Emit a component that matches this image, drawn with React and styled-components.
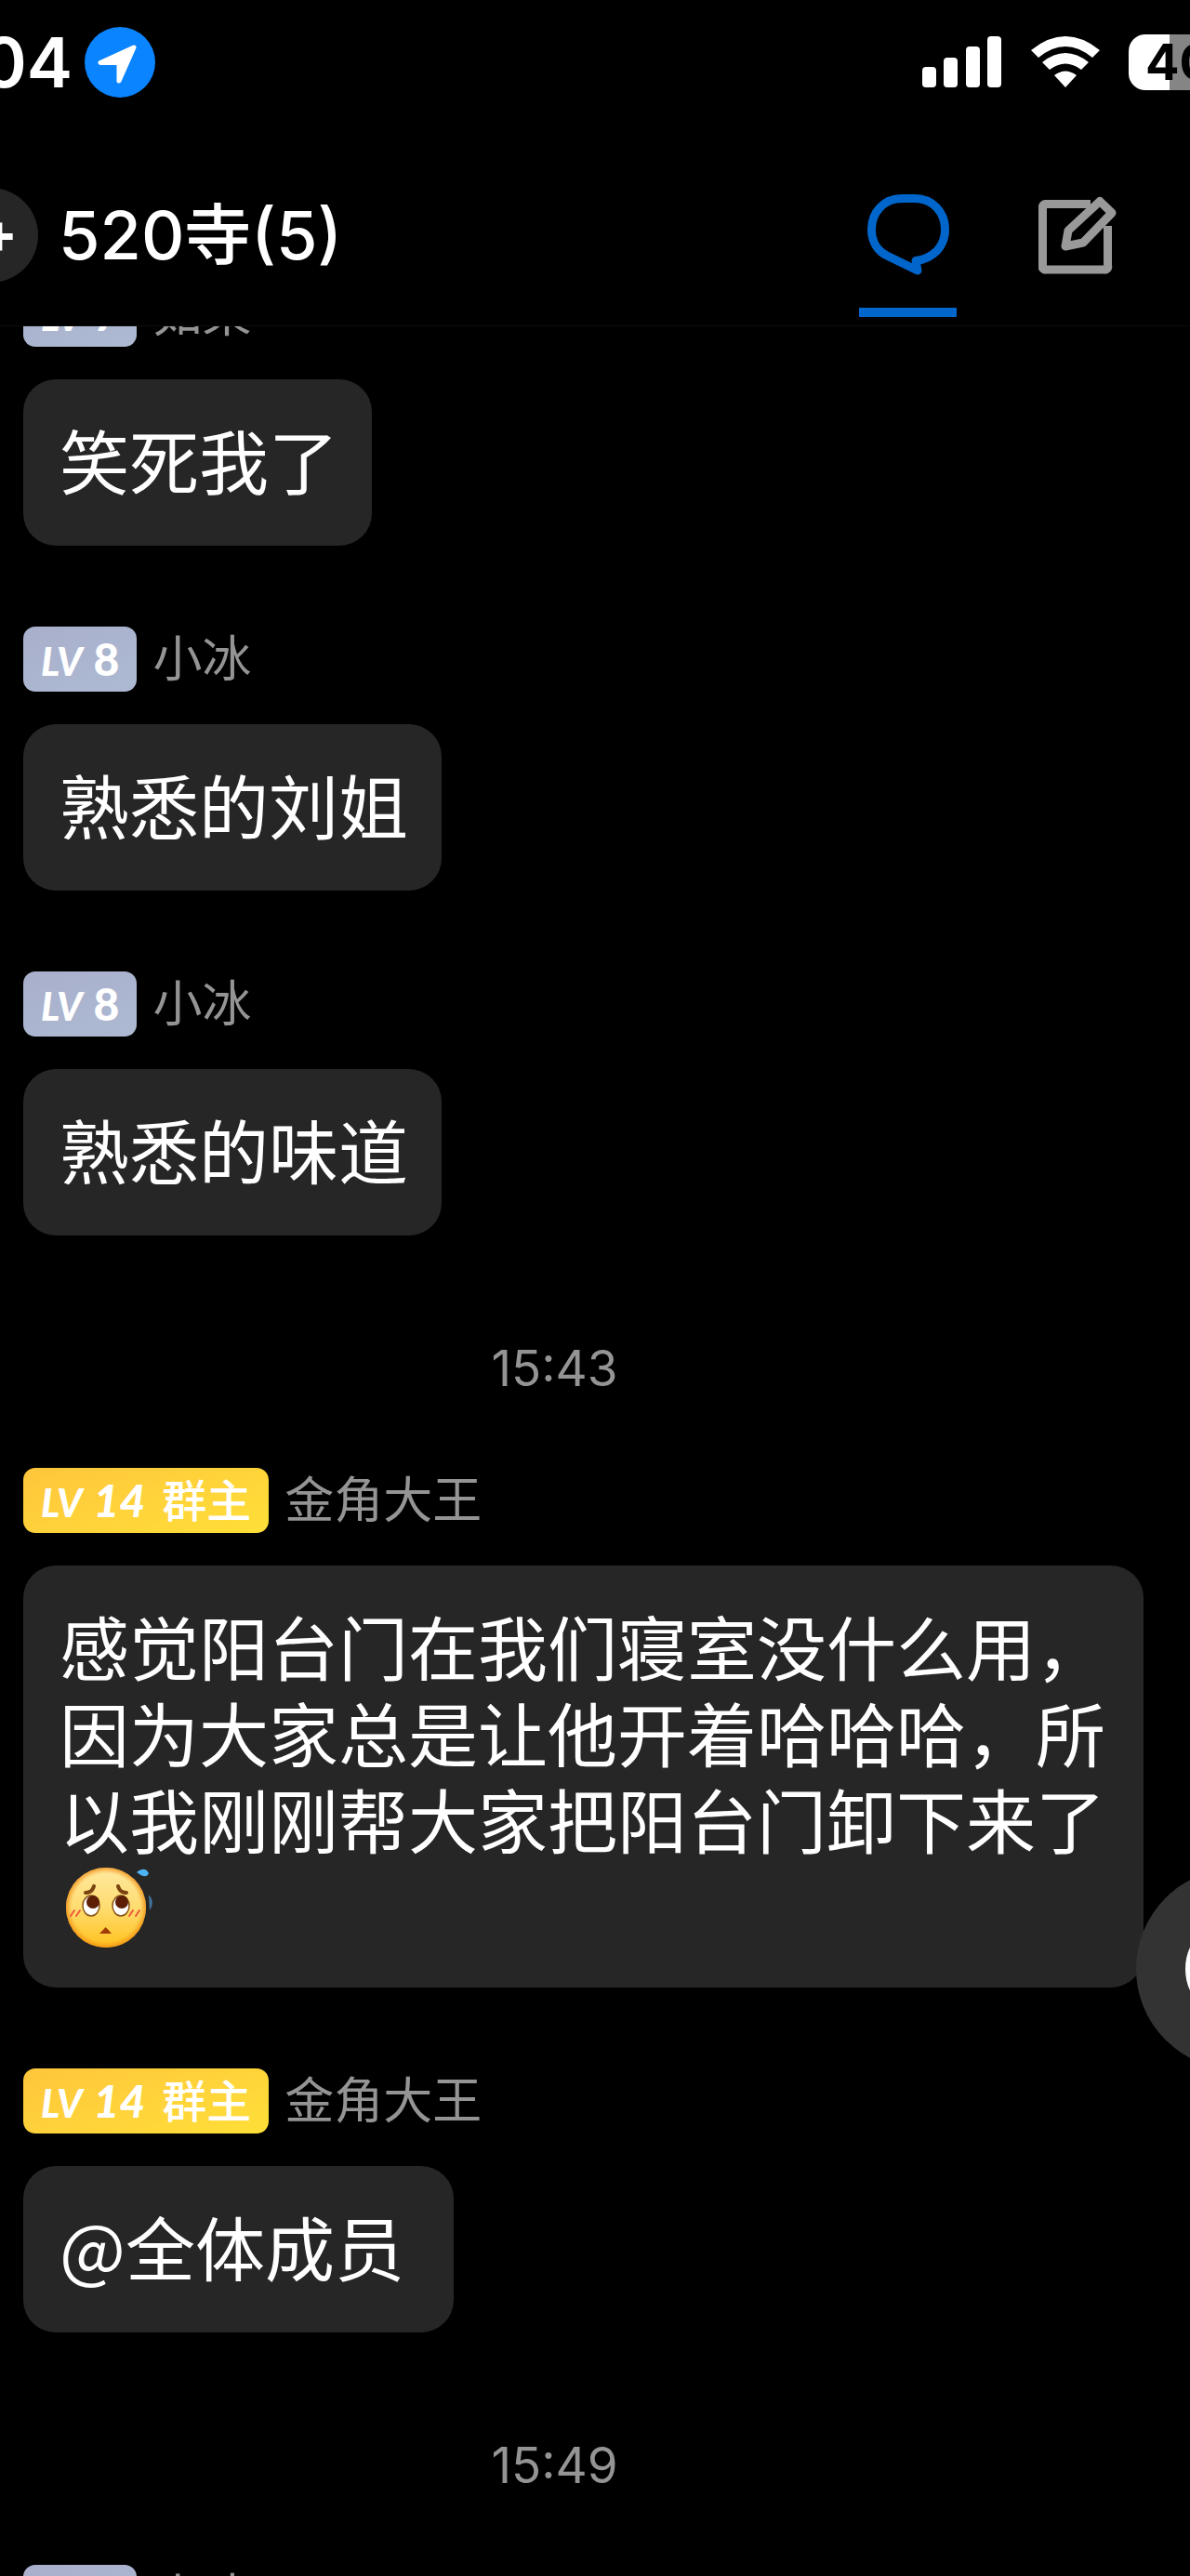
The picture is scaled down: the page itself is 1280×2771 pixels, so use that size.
import React from "react";
import styled, { createGlobalStyle } from "styled-components";

const GlobalStyle = createGlobalStyle`
  * {
    box-sizing: border-box;
  }

  body {
    margin: 0;
    background: #000;
    color: #fff;
    font-family: Inter, "Noto Sans CJK SC", sans-serif;
  }

  h1, p, ul {
    margin: 0;
    padding: 0;
  }
`;

const messages = [
  { id: 1, level: 7, name: "如果", text: "笑死我了" },
  { id: 2, level: 8, name: "小冰", text: "熟悉的刘姐" },
  { id: 3, level: 8, name: "小冰", text: "熟悉的味道" },
  { id: 4, time: "15:43" },
  {
    id: 5,
    level: 14,
    owner: true,
    name: "金角大王",
    text: "感觉阳台门在我们寝室没什么用，因为大家总是让他开着哈哈哈，所以我刚刚帮大家把阳台门卸下来了",
    emoji: true,
  },
  { id: 6, level: 14, owner: true, name: "金角大王", text: "@全体成员\u00a0" },
  { id: 7, time: "15:49" },
  { id: 8, level: 8, name: "小冰" },
];

const LocationIcon = () => (
  <svg width="76" height="76" viewBox="0 0 76 76" aria-hidden="true">
    <circle cx="38" cy="38" r="38" fill="#0a84ff" />
    <path
      d="M53 22 17 38.500H37V58Z"
      fill="#fff"
      stroke="#fff"
      strokeWidth="5"
      strokeLinejoin="round"
    />
  </svg>
);

const SignalIcon = () => (
  <svg width="86" height="56" viewBox="0 0 86 56" fill="#fff" aria-hidden="true">
    <rect x="0" y="33" width="15" height="22" rx="4" />
    <rect x="23" y="23" width="15" height="32" rx="4" />
    <rect x="47" y="11" width="15" height="44" rx="4" />
    <rect x="70" y="0" width="15" height="55" rx="4" />
  </svg>
);

const WifiIcon = () => (
  <svg width="74" height="56" viewBox="0 0 74 56" fill="#fff" aria-hidden="true">
    <path d="M0 15Q37-15 74 15L66 23Q37-1 8 23Z" />
    <path d="M12 28Q37 8 62 28L54 36Q37 23 20 36Z" />
    <path d="M25 42Q37 33 49 42L37 55Z" />
  </svg>
);

const ChatIcon = () => (
  <svg width="88" height="88" viewBox="0 0 88 88" fill="none" aria-hidden="true">
    <path
      d="M37 4.500H51C70 4.500 83.500 19 83.500 38C83.500 56 71 69 52 71.500L54 82L22 66.500C10 61 4.500 50 4.500 38C4.500 19 18 4.500 37 4.500Z"
      stroke="#0066cc"
      strokeWidth="9"
      strokeLinejoin="round"
    />
  </svg>
);

const EditIcon = () => (
  <svg width="84" height="84" viewBox="0 0 84 84" fill="none" stroke="#999" strokeWidth="9" aria-hidden="true">
    <path d="M56 8.500H8A3 3 0 0 0 4.500 12V75A3 3 0 0 0 8 79H71A3 3 0 0 0 74.500 75V32" />
    <path d="M66 5.500 79 18 48 50 29 54 32 37Z" strokeLinejoin="round" />
  </svg>
);

const WorriedFace = () => (
  <FaceSvg viewBox="-6 -1 102 93" role="img" aria-label="流汗">
    <defs>
      <linearGradient id="skin" x1="0" y1="0" x2="0" y2="1">
        <stop offset="0" stopColor="#ffe9a0" />
        <stop offset="0.500" stopColor="#fedc70" />
        <stop offset="1" stopColor="#ffc21c" />
      </linearGradient>
      <radialGradient id="edge">
        <stop offset="0.850" stopColor="#f59a1c" stopOpacity="0" />
        <stop offset="1" stopColor="#f08c12" stopOpacity="0.800" />
      </radialGradient>
    </defs>
    <circle cx="44" cy="49" r="43" fill="url(#skin)" />
    <circle cx="44" cy="49" r="43" fill="url(#edge)" />
    <path d="M22 33Q29 33 31 26M66 33Q59 33 57 26" fill="none" stroke="#7a4310" strokeWidth="4" strokeLinecap="round" />
    <ellipse cx="28" cy="47" rx="9" ry="11" fill="#fff" stroke="#8a5518" strokeWidth="1.500" />
    <ellipse cx="60" cy="47" rx="9" ry="11" fill="#fff" stroke="#8a5518" strokeWidth="1.500" />
    <circle cx="30" cy="43" r="7" fill="#5c1f06" />
    <circle cx="61" cy="43" r="7" fill="#5c1f06" />
    <path d="M6 58 10 52M12 58 16 52M69 58 73 52M76 58 80 52" stroke="#ef5a3a" strokeWidth="2" strokeLinecap="round" />
    <path d="M37 77Q41 73 43.500 70Q47 73 50 77Z" fill="#a33c08" />
    <path d="M77 11Q86 4 90 12Q87 19 77 11Z" fill="#4db3f5" />
    <path d="M90 35Q97 43 91 52Z" fill="#41759f" />
  </FaceSvg>
);

const Message = ({ message }) => {
  const { level, owner, name, text, emoji } = message;

  return (
    <MessageItem>
      <Sender>
        <Badge $owner={owner}>
          <LevelLabel>LV</LevelLabel>
          <LevelNumber $owner={owner}>{level}</LevelNumber>
          {owner && <Role>群主</Role>}
        </Badge>
        <Name>{name}</Name>
      </Sender>
      {text && (
        <Bubble>
          {text}
          {emoji && <WorriedFace />}
        </Bubble>
      )}
    </MessageItem>
  );
};

const App = () => {
  return (
    <Screen>
      <GlobalStyle />
      <StatusBar>
        <Clock>04</Clock>
        <LocationIcon />
        <StatusIcons>
          <SignalIcon />
          <WifiIcon />
          <Battery>40</Battery>
        </StatusIcons>
      </StatusBar>

      <Header>
        <BackButton type="button" aria-label="返回">+</BackButton>
        <Title>520寺(5)</Title>
        <Tabs>
          <Tab type="button" aria-label="聊天" $active>
            <ChatIcon />
          </Tab>
          <Tab type="button" aria-label="编辑">
            <EditIcon />
          </Tab>
        </Tabs>
      </Header>

      <Feed>
        <MessageList>
          {messages.map((item) =>
            item.time ? (
              <TimeRow key={item.id}>{item.time}</TimeRow>
            ) : (
              <Message key={item.id} message={item} />
            )
          )}
        </MessageList>
      </Feed>

      <FloatingButton type="button" aria-label="快捷操作" />
    </Screen>
  );
};

const Screen = styled.div`
  position: relative;
  display: flex;
  flex-direction: column;
  height: 100vh;
  overflow: hidden;
`;

const StatusBar = styled.div`
  display: flex;
  align-items: center;
  flex-shrink: 0;
  height: 133px;
  white-space: nowrap;
`;

const Clock = styled.span`
  margin-left: -20px;
  margin-right: 13px;
  font-size: 74px;
  font-weight: 600;
  line-height: 80px;
`;

const StatusIcons = styled.div`
  display: flex;
  align-items: center;
  gap: 31px;
  margin-left: auto;
`;

const Battery = styled.span`
  width: 66px;
  height: 60px;
  padding-left: 18px;
  overflow: hidden;
  border-radius: 18px 0 0 18px;
  background: linear-gradient(to right, #fff 44px, #858585 44px);
  color: #000;
  font-size: 54px;
  font-weight: 700;
  line-height: 60px;
`;

const Header = styled.header`
  display: flex;
  align-items: center;
  flex-shrink: 0;
  height: 218px;
  padding-top: 22px;
  border-bottom: 1px solid #0e0e0e;
`;

const BackButton = styled.button`
  width: 102px;
  height: 102px;
  margin-left: -61px;
  padding: 0 22px 6px 0;
  border: none;
  border-radius: 51px;
  background: #262626;
  color: #fff;
  font-family: inherit;
  font-size: 60px;
  font-weight: 700;
  text-align: right;
  cursor: pointer;
`;

const Title = styled.h1`
  margin-left: 22px;
  font-size: 72px;
  font-weight: 500;
  line-height: 100px;
  white-space: nowrap;
`;

const Tabs = styled.nav`
  display: flex;
  align-self: stretch;
  gap: 77px;
  margin-left: auto;
  padding-right: 69px;
`;

const Tab = styled.button`
  display: flex;
  justify-content: center;
  align-items: center;
  width: 105px;
  margin-bottom: 9px;
  padding: 20px 0 0;
  border: none;
  border-bottom: 10px solid ${({ $active }) => ($active ? "#0066cc" : "transparent")};
  background: none;
  cursor: pointer;
`;

const Feed = styled.main`
  display: flex;
  flex-direction: column;
  flex: 1;
  min-height: 0;
  overflow: hidden;
`;

/* scrolled a little way down, so the first sender is cut by the header */
const MessageList = styled.ul`
  display: flex;
  flex-direction: column;
  gap: 87px;
  margin-top: -48px;
  padding: 0 50px 0 25px;
  list-style: none;
`;

const MessageItem = styled.li`
  display: flex;
  flex-direction: column;
  align-items: flex-start;
  gap: 35px;
`;

const Sender = styled.div`
  display: flex;
  align-items: center;
  gap: 17px;
  height: 70px;
`;

const Badge = styled.span`
  display: flex;
  align-items: baseline;
  height: 70px;
  padding: 0 19px;
  border-radius: 13px;
  background: ${({ $owner }) =>
    $owner
      ? "linear-gradient(160deg, #ffc63c, #ffdf38)"
      : "linear-gradient(160deg, #a9afcb, #adbad2)"};
  font-family: Lato, "Noto Sans CJK SC", sans-serif;
  line-height: 70px;
  white-space: nowrap;
`;

const LevelLabel = styled.span`
  font-size: 42px;
  font-style: italic;
  font-weight: 900;
`;

const LevelNumber = styled.span`
  margin-left: 12px;
  font-size: 48px;
  font-style: ${({ $owner }) => ($owner ? "italic" : "normal")};
  font-weight: 900;
`;

const Role = styled.span`
  margin-left: 18px;
  font-size: 48px;
  font-weight: 500;
`;

const Name = styled.span`
  color: #949494;
  font-size: 53px;
  line-height: 70px;
`;

const Bubble = styled.p`
  min-height: 179px;
  padding: 39px 36px 43px 39px;
  border-radius: 35px;
  background: #262626;
  font-family: "Noto Sans CJK SC", sans-serif;
  font-size: 75px;
  line-height: 93px;
`;

const FaceSvg = styled.svg`
  width: 102px;
  height: 93px;
  vertical-align: top;
`;

const TimeRow = styled.li`
  padding: 36px 62px 0 0;
  color: #949494;
  font-size: 53px;
  line-height: 40px;
  text-align: center;
`;

const FloatingButton = styled.button`
  position: absolute;
  right: -158px;
  bottom: 545px;
  width: 216px;
  height: 216px;
  border: 53px solid #333;
  border-radius: 50%;
  background: #fff;
  cursor: pointer;
`;

export default App;
